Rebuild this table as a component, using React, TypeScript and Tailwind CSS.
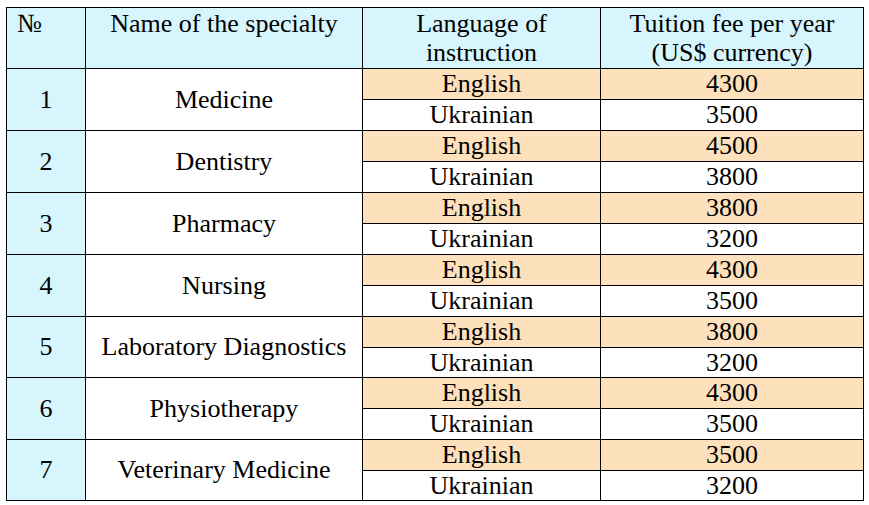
const rows = [
  { n: 1, name: "Medicine", en: "4300", ua: "3500", short: false },
  { n: 2, name: "Dentistry", en: "4500", ua: "3800", short: false },
  { n: 3, name: "Pharmacy", en: "3800", ua: "3200", short: false },
  { n: 4, name: "Nursing", en: "4300", ua: "3500", short: false },
  { n: 5, name: "Laboratory Diagnostics", en: "3800", ua: "3200", short: true },
  { n: 6, name: "Physiotherapy", en: "4300", ua: "3500", short: false },
  { n: 7, name: "Veterinary Medicine", en: "3500", ua: "3200", short: true },
];

export default function App() {
  return (
    <div className="w-[869px] h-[505px] bg-white pt-[7px] pl-[6px] text-black">
      <table className="border-collapse table-fixed w-[857px] font-[Liberation_Serif,serif] text-[26px]">
        <colgroup>
          <col className="w-[79px]" />
          <col className="w-[277px]" />
          <col className="w-[238px]" />
          <col className="w-[263px]" />
        </colgroup>
        <thead>
          <tr className="bg-[#d6f5fc] h-[61px] leading-[29px]">
            <th className="border border-black font-normal align-top text-left pl-[10px] pt-[1px]">№</th>
            <th className="border border-black font-normal align-top text-center pt-[1px]">Name of the specialty</th>
            <th className="border border-black font-normal align-top text-center pt-[1px]">
              Language of
              <br />
              instruction
            </th>
            <th className="border border-black font-normal align-top text-center pt-[1px]">
              Tuition fee per year
              <br />
              (US$ currency)
            </th>
          </tr>
        </thead>
        <tbody>
          {rows.map((r) => [
            <tr key={r.n + "en"} className="h-[31px] leading-[28px]">
              <td rowSpan={2} className="border border-black bg-[#d6f5fc] text-center align-middle">
                {r.n}
              </td>
              <td rowSpan={2} className="border border-black bg-white text-center align-middle">
                {r.name}
              </td>
              <td className="border border-black bg-[#fde0bc] text-center p-0">English</td>
              <td className="border border-black bg-[#fde0bc] text-center p-0">{r.en}</td>
            </tr>,
            <tr key={r.n + "ua"} className={(r.short ? "h-[30px]" : "h-[31px]") + " leading-[28px]"}>
              <td className="border border-black bg-white text-center p-0">Ukrainian</td>
              <td className="border border-black bg-white text-center p-0">{r.ua}</td>
            </tr>,
          ])}
        </tbody>
      </table>
    </div>
  );
}
